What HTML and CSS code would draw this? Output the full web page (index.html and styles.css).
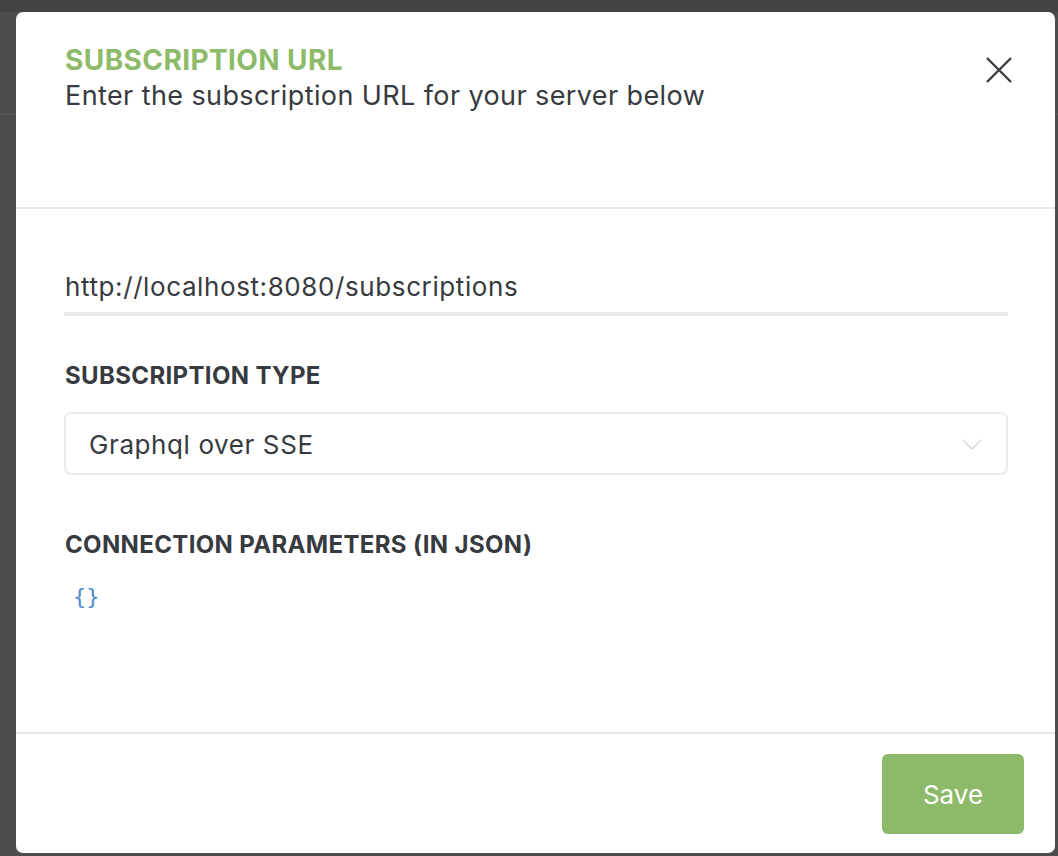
FILE: index.html
```html
<!DOCTYPE html>
<html>
<head>
<meta charset="utf-8">
<link rel="stylesheet" href="styles.css">
</head>
<body>
<div class="backdrop">
  <div class="modal">
    <div class="modal-header">
      <div class="titles">
        <div class="title">SUBSCRIPTION URL</div>
        <div class="subtitle">Enter the subscription URL for your server below</div>
      </div>
      <button class="close" aria-label="Close">
        <svg width="26" height="26" viewBox="0 0 26 26"><path d="M1 1 L25 25 M25 1 L1 25" stroke="#3a3d42" stroke-width="2.4" fill="none"/></svg>
      </button>
    </div>
    <div class="modal-body">
      <div class="url-input">http://localhost:8080/subscriptions</div>
      <div class="label label-type">SUBSCRIPTION TYPE</div>
      <div class="select">
        <span>Graphql over SSE</span>
        <svg class="chev" width="20" height="12" viewBox="0 0 20 12"><path d="M1 1 L10 10 L19 1" stroke="#d4d4d4" stroke-width="1.4" fill="none"/></svg>
      </div>
      <div class="label label-params">CONNECTION PARAMETERS (IN JSON)</div>
      <div class="code">{}</div>
    </div>
    <div class="modal-footer">
      <button class="save">Save</button>
    </div>
  </div>
</div>
</body>
</html>
```
FILE: styles.css
```css
* { box-sizing: border-box; }
html, body { margin: 0; padding: 0; }
body {
  width: 1058px;
  height: 856px;
  overflow: hidden;
  background: #4d4d4d;
  font-family: Inter, "Noto Sans", sans-serif;
}
.backdrop {
  height: 856px;
  padding: 12px 0 0 16px;
  background:
    linear-gradient(#444444, #444444) 0 0 / 100% 12px no-repeat,
    linear-gradient(#575757, #575757) 0 114px / 100% 1px no-repeat,
    #4d4d4d;
}
.modal {
  width: 1039px;
  height: 841px;
  background: #ffffff;
  border-radius: 7px;
  display: flex;
  flex-direction: column;
}
.modal-header {
  height: 197px;
  border-bottom: 2px solid #e8e8e8;
  display: flex;
  justify-content: space-between;
  align-items: flex-start;
  padding: 31px 43px 0 49px;
}
.title {
  color: #8dbb69;
  font-weight: 700;
  font-size: 28px;
  line-height: 34px;
  letter-spacing: 0.4px;
  margin-bottom: 3px;
}
.subtitle {
  color: #373a3f;
  font-size: 27px;
  line-height: 32px;
  letter-spacing: 0.4px;
}
.close {
  border: 0;
  background: none;
  padding: 0;
  margin-top: 14px;
  width: 26px;
  height: 26px;
  cursor: pointer;
}
.modal-body {
  flex: 1;
  padding: 0 47px 0 48px;
  display: flex;
  flex-direction: column;
}
.url-input {
  margin-top: 58px;
  color: #373a3f;
  font-size: 26px;
  line-height: 40px;
  letter-spacing: 0.6px;
  padding-left: 1px;
  border-bottom: 4px solid #ebebeb;
  padding-bottom: 5px;
}
.label {
  color: #373a3f;
  font-weight: 700;
  font-size: 24px;
  line-height: 28px;
  letter-spacing: 0.35px;
  padding-left: 1px;
}
.label-type { margin-top: 46px; }
.select {
  margin-top: 22px;
  height: 63px;
  border: 2px solid #ebebeb;
  border-radius: 7px;
  display: flex;
  align-items: center;
  justify-content: space-between;
  padding: 2px 24px 0 23px;
  color: #373a3f;
  font-size: 26px;
  letter-spacing: 0.6px;
}
.label-params { margin-top: 56px; }
.code {
  margin-top: 24px;
  padding-left: 9px;
  color: #4a8bc7;
  font-family: "DejaVu Sans Mono", monospace;
  font-size: 22px;
  line-height: 28px;
}
.modal-footer {
  height: 121px;
  border-top: 2px solid #e8e8e8;
  display: flex;
  justify-content: flex-end;
  align-items: flex-start;
  padding: 20px 31px 0 0;
}
.save {
  width: 142px;
  height: 80px;
  border: 0;
  border-radius: 6px;
  background: #8cba69;
  color: #ffffff;
  font-family: Inter, "Noto Sans", sans-serif;
  font-size: 26px;
  cursor: pointer;
}
```
